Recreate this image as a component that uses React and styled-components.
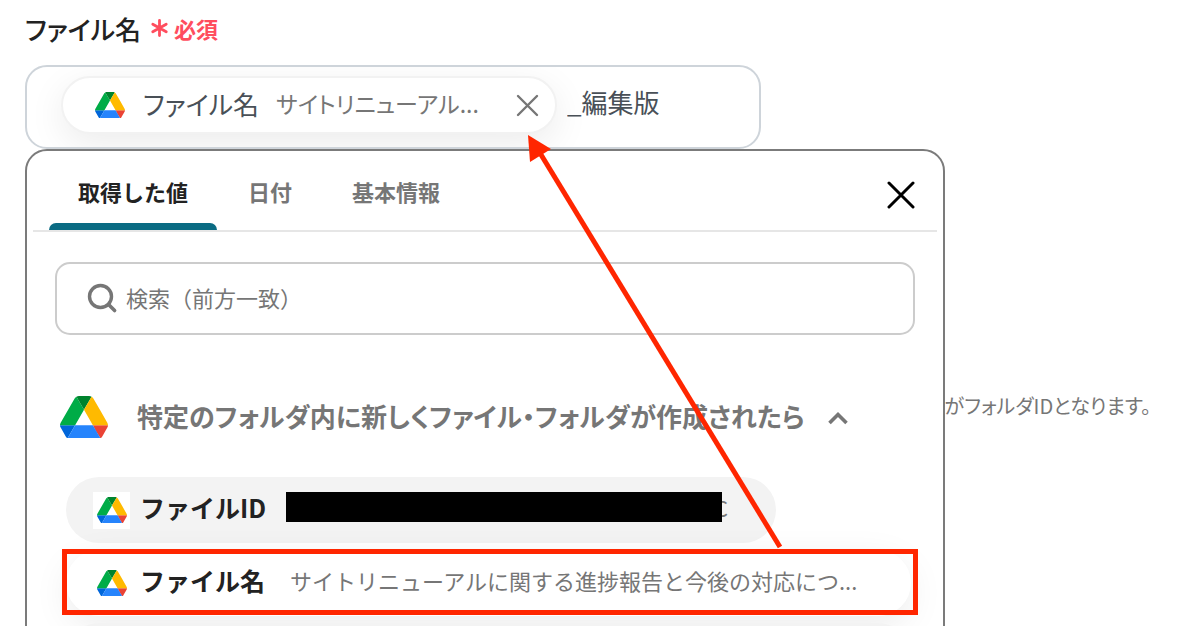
import React, { useState } from 'react'
import styled, { createGlobalStyle } from 'styled-components'

const GlobalStyle = createGlobalStyle`
    * {
        box-sizing: border-box;
    }
    body {
        margin: 0;
        background: #fff;
        color: #222;
        font-family: "Noto Sans CJK JP", "Noto Sans", sans-serif;
    }
    button, input {
        font-family: inherit;
        color: inherit;
    }
    button {
        padding: 0;
        border: 0;
        background: none;
        cursor: pointer;
    }
`

const Page = styled.main`
    height: 100vh;
    overflow: hidden;
    padding: 10px 37px 0 25px;
`

const FieldLabel = styled.label`
    display: flex;
    align-items: center;
    gap: 10px;
    height: 36px;
    font-size: 26px;
    font-weight: 500;
    font-feature-settings: "palt";
`

const Required = styled.span`
    display: flex;
    align-items: center;
    gap: 6px;
    font-size: 22px;
    font-weight: 700;
    color: #ff4d5e;
`

const FieldArea = styled.div`
    position: relative;
    margin-top: 19px;
`

const Field = styled.div`
    display: flex;
    align-items: center;
    gap: 10px;
    max-width: 736px;
    height: 84px;
    padding: 0 24px 4px 34px;
    overflow: hidden;
    border: 2px solid #ced4da;
    border-radius: 22px;
`

const Chip = styled.span`
    display: flex;
    flex: none;
    align-items: center;
    width: 496px;
    height: 58px;
    padding: 0 16px 0 32px;
    border: 2px solid #f2f2f2;
    border-radius: 29px;
    background: #fff;
    box-shadow: 0 10px 36px rgba(0, 0, 0, 0.08);
    font-feature-settings: "palt";
`

const ChipName = styled.span`
    margin-left: 18px;
    padding-bottom: 4px;
    font-size: 26px;
    color: #495057;
`

const ChipValue = styled.span`
    flex: 1;
    margin-left: 17px;
    padding-bottom: 4px;
    font-size: 23px;
    color: #767676;
`

const IconButton = styled.button`
    display: flex;
    align-items: center;
    color: ${props => props.color};
`

const FieldInput = styled.input`
    flex: 1;
    min-width: 0;
    height: 48px;
    padding: 0 0 8px;
    border: 0;
    outline: 0;
    background: none;
    font-size: 26px;
    color: #495057;
`

const Help = styled.p`
    margin: 242px 6px 0 0;
    font-size: 20px;
    line-height: 30px;
    text-align: right;
    color: #767676;
    font-feature-settings: "palt";
`

const Panel = styled.section`
    position: absolute;
    top: 84px;
    left: 0;
    width: 100%;
    max-width: 920px;
    height: 600px;
    border: 2px solid #7b7b7b;
    border-radius: 22px;
    background: #fff;
    box-shadow: 0 460px 40px -20px rgba(0, 40, 20, 0.05);
`

const PanelHead = styled.div`
    display: flex;
    align-items: stretch;
    height: 81px;
    margin: 0 6px;
    padding: 0 22px 0 16px;
    border-bottom: 2px solid #e6e6e6;

    & > ${IconButton} {
        padding-top: 8px;
    }
`

const Tabs = styled.div`
    display: flex;
    flex: 1;
    gap: 2px;
`

const Tab = styled.button`
    display: flex;
    flex-direction: column;
    justify-content: space-between;
    padding: 22px 0 0;
    font-size: 22px;
    font-weight: 700;
    line-height: 36px;
    color: ${props => (props.$active ? '#222' : '#767676')};

    span {
        padding: 0 29px;
    }

    &::after {
        content: "";
        width: 100%;
        height: 7px;
        border-radius: 7px 7px 0 0;
        background: ${props => (props.$active ? '#0a6b83' : 'transparent')};
    }
`

const Search = styled.label`
    display: flex;
    align-items: center;
    gap: 7px;
    height: 73px;
    margin: 30px 28px 0;
    padding: 0 30px;
    border: 2px solid #ccc;
    border-radius: 15px;
    color: #767676;

    input {
        flex: 1;
        min-width: 0;
        padding: 0 0 4px;
        border: 0;
        outline: 0;
        background: none;
        font-size: 22px;
    }

    input::placeholder {
        color: #767676;
        opacity: 1;
    }
`

const GroupHead = styled.button`
    display: flex;
    align-items: center;
    height: 44px;
    margin: 60px 33px 0;
    color: #767676;
`

const GroupTitle = styled.span`
    margin: 0 23px 0 29px;
    padding-bottom: 2px;
    font-size: 26px;
    font-weight: 700;
    line-height: 40px;
    white-space: nowrap;
    font-feature-settings: "palt";
`

const List = styled.ul`
    display: flex;
    flex-direction: column;
    align-items: flex-start;
    gap: 7px;
    margin: 38px 0 0;
    padding: 0 32px 0 39px;
    list-style: none;
`

const Item = styled.li`
    position: relative;
    width: ${props => (props.$wide ? '100%' : 'auto')};
    border-radius: 33px;
    background: ${props => (props.$raised ? '#fff' : '#f3f3f3')};
    box-shadow: ${props => (props.$raised ? '0 10px 36px rgba(0, 0, 0, 0.08)' : 'none')};
`

const ItemButton = styled.button`
    display: flex;
    align-items: center;
    width: 100%;
    height: 66px;
    padding: 0 48px 0 27px;
    white-space: nowrap;
`

const IconTile = styled.span`
    display: flex;
    align-items: center;
    justify-content: center;
    width: 37px;
    height: 37px;
    background: #fff;
`

const ItemName = styled.span`
    margin-left: 10px;
    padding-bottom: 6px;
    font-size: 25px;
    font-weight: 700;
`

const ItemValue = styled.span`
    display: flex;
    align-items: center;
    margin-left: ${props => (props.$masked ? '20px' : '25px')};
    padding-bottom: 6px;
    font-size: 22px;
    color: #767676;
`

const Mask = styled.span`
    position: relative;
    width: 436px;
    height: 30px;
    margin-right: -8px;
    background: #000;
`

const Highlight = styled.span`
    position: absolute;
    inset: -1px -7px 1px -4px;
    border: 5px solid #ff2600;
    pointer-events: none;
`

const Arrow = styled.svg`
    position: absolute;
    top: -18px;
    left: 500px;
    pointer-events: none;
`

const DriveIcon = ({ width }) => (
    <svg width={width} viewBox="0 0 87.3 78" aria-hidden="true">
        <path d="m6.6 66.85 3.85 6.65c.8 1.4 1.95 2.5 3.3 3.3l13.75-23.8h-27.5c0 1.55.4 3.1 1.2 4.5z" fill="#0066da" />
        <path d="m43.65 25-13.75-23.8c-1.35.8-2.5 1.9-3.3 3.3l-25.4 44a9.06 9.06 0 0 0-1.2 4.5h27.5z" fill="#00ac47" />
        <path d="m73.55 76.8c1.35-.8 2.5-1.9 3.3-3.3l1.6-2.75 7.65-13.25c.8-1.4 1.2-2.95 1.2-4.5h-27.5l5.85 11.5z" fill="#ea4335" />
        <path d="m43.65 25 13.75-23.8c-1.35-.8-2.9-1.2-4.5-1.2h-18.5c-1.6 0-3.15.45-4.5 1.2z" fill="#00832d" />
        <path d="m59.8 53h-32.3l-13.75 23.8c1.35.8 2.9 1.2 4.5 1.2h50.8c1.6 0 3.15-.45 4.5-1.2z" fill="#2684fc" />
        <path d="m73.4 26.5-12.7-22c-.8-1.4-1.95-2.5-3.3-3.3l-13.75 23.8 16.15 28h27.45c0-1.55-.4-3.1-1.2-4.5z" fill="#ffba00" />
    </svg>
)

const CloseIcon = ({ size, stroke }) => (
    <svg width={size} height={size} viewBox={`0 0 ${size} ${size}`} aria-hidden="true">
        <path d={`M2 2 L${size - 2} ${size - 2} M${size - 2} 2 L2 ${size - 2}`} stroke="currentColor" strokeWidth={stroke} strokeLinecap="round" />
    </svg>
)

const tabs = ['取得した値', '日付', '基本情報']

export default function App() {
    const [tab, setTab] = useState(tabs[0])
    const [suffix, setSuffix] = useState('_編集版')
    const [query, setQuery] = useState('')

    return (
        <Page>
            <GlobalStyle />
            <FieldLabel htmlFor="fileName">
                ファイル名
                <Required>
                    <svg width="17" height="18" viewBox="0 0 17 18" aria-hidden="true">
                        <path d="M8.5 1.5v15M1.8 5.2l13.4 7.6M15.2 5.2L1.8 12.8" stroke="currentColor" strokeWidth="2.8" strokeLinecap="round" />
                    </svg>
                    必須
                </Required>
            </FieldLabel>
            <FieldArea>
                <Field>
                    <Chip>
                        <DriveIcon width={30} />
                        <ChipName>ファイル名</ChipName>
                        <ChipValue>サイトリニューアル...</ChipValue>
                        <IconButton color="#767676" aria-label="削除">
                            <CloseIcon size={23} stroke={2.4} />
                        </IconButton>
                    </Chip>
                    <FieldInput id="fileName" type="text" value={suffix} onChange={e => setSuffix(e.target.value)} />
                </Field>
                <Help>がフォルダIDとなります。</Help>
                <Panel>
                    <PanelHead>
                        <Tabs role="tablist">
                            {tabs.map(name => (
                                <Tab key={name} role="tab" aria-selected={name === tab} $active={name === tab} onClick={() => setTab(name)}>
                                    <span>{name}</span>
                                </Tab>
                            ))}
                        </Tabs>
                        <IconButton color="#000" aria-label="閉じる">
                            <CloseIcon size={28} stroke={3} />
                        </IconButton>
                    </PanelHead>
                    <Search>
                        <svg width="32" height="32" viewBox="0 0 32 32" fill="none" aria-hidden="true">
                            <circle cx="13.5" cy="13.5" r="11" stroke="currentColor" strokeWidth="3.4" />
                            <path d="M21.8 21.8l5.8 5.8" stroke="currentColor" strokeWidth="3.6" strokeLinecap="round" />
                        </svg>
                        <input type="text" aria-label="検索" placeholder="検索（前方一致）" value={query} onChange={e => setQuery(e.target.value)} />
                    </Search>
                    <GroupHead aria-expanded="true">
                        <DriveIcon width={48} />
                        <GroupTitle>特定のフォルダ内に新しくファイル・フォルダが作成されたら</GroupTitle>
                        <svg width="20" height="15" viewBox="0 0 20 15" fill="none" aria-hidden="true">
                            <path d="M1.5 13l8.5-8.5 8.5 8.5" stroke="currentColor" strokeWidth="3.6" />
                        </svg>
                    </GroupHead>
                    <List>
                        <Item>
                            <ItemButton>
                                <IconTile><DriveIcon width={30} /></IconTile>
                                <ItemName>ファイルID</ItemName>
                                <ItemValue $masked><Mask />C</ItemValue>
                            </ItemButton>
                        </Item>
                        <Item $wide $raised>
                            <ItemButton>
                                <IconTile><DriveIcon width={30} /></IconTile>
                                <ItemName>ファイル名</ItemName>
                                <ItemValue>サイトリニューアルに関する進捗報告と今後の対応につ...</ItemValue>
                            </ItemButton>
                            <Highlight />
                        </Item>
                        <Item $wide>
                            <ItemButton />
                        </Item>
                    </List>
                    <Arrow width="260" height="420" viewBox="0 0 260 420" aria-hidden="true">
                        <path d="M253 414L13 20" stroke="#ff2600" strokeWidth="5" />
                        <path d="M1 2L24 16L3 29Z" fill="#ff2600" />
                    </Arrow>
                </Panel>
            </FieldArea>
        </Page>
    )
}
